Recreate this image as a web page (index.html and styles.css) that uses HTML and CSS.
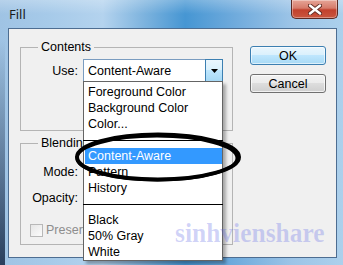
FILE: index.html
```html
<!DOCTYPE html>
<html>
<head>
<meta charset="utf-8">
<link rel="stylesheet" href="styles.css">
</head>
<body>
<div class="window">
  <div class="titlebar">
    <span class="title">Fill</span>
    <div class="close">
      <svg width="14" height="11" viewBox="0 0 14 11">
        <path d="M2 1.5 L12 9.5 M12 1.5 L2 9.5" stroke="#5e2a22" stroke-width="4.2" stroke-linecap="round"/>
        <path d="M2 1.5 L12 9.5 M12 1.5 L2 9.5" stroke="#ffffff" stroke-width="2.4" stroke-linecap="round"/>
      </svg>
    </div>
  </div>
  <div class="client">
    <div class="left">
      <div class="group contents">
        <span class="legend">Contents</span>
        <div class="row use">
          <span class="lbl">Use:</span>
          <div class="combo">
            <span class="combo-value">Content-Aware</span>
            <span class="combo-btn">
              <svg width="7" height="4" viewBox="0 0 7 4"><path d="M0 0 H7 L3.5 4 Z" fill="#000"/></svg>
            </span>
            <ul class="droplist">
              <li>Foreground Color</li>
              <li>Background Color</li>
              <li>Color...</li>
              <li class="sep"></li>
              <li class="sel">Content-Aware</li>
              <li>Pattern</li>
              <li>History</li>
              <li class="sep"></li>
              <li>Black</li>
              <li>50% Gray</li>
              <li>White</li>
            </ul>
          </div>
        </div>
      </div>
      <div class="group blending">
        <span class="legend">Blending</span>
        <div class="row mode"><span class="lbl">Mode:</span></div>
        <div class="row opacity"><span class="lbl">Opacity:</span></div>
        <div class="check-row">
          <span class="checkbox"></span>
          <span class="dim">Preserve Transparency</span>
        </div>
      </div>
    </div>
    <div class="buttons">
      <button class="btn default">OK</button>
      <button class="btn">Cancel</button>
    </div>
  </div>
  <div class="watermark">sinhvienshare</div>
  <svg class="ellipse" width="343" height="265" viewBox="0 0 343 265">
    <ellipse cx="158" cy="157" rx="81" ry="22.5" fill="none" stroke="#000" stroke-width="4"/>
    <ellipse cx="157" cy="158" rx="80" ry="22" fill="none" stroke="#000" stroke-width="3"/>
  </svg>
</div>
</body>
</html>
```

FILE: styles.css
```css
* { box-sizing: border-box; }

body {
  margin: 0;
  font-family: "Liberation Sans", Arial, sans-serif;
  font-size: 12.5px;
  color: #000;
}

.window {
  position: relative;
  width: 343px;
  height: 265px;
  overflow: hidden;
  background:
    linear-gradient(to bottom, rgba(20, 45, 80, 0) 15%, rgba(20, 40, 70, 0.85) 100%) 0 0 / 5px 100% no-repeat,
    linear-gradient(to bottom, rgba(255, 255, 255, 0.25) 0, rgba(255, 255, 255, 0) 14px),
    linear-gradient(to right, #9fc3e4 0%, #a6cae9 14%, #b4d3ee 30%, #7db3de 42%, #4696d3 54%, #6eaadc 68%, #9cc4e7 85%, #acd0ec 100%);
}

.titlebar {
  height: 28px;
  display: flex;
  align-items: flex-start;
}

.title {
  font-family: "Noto Sans", "Liberation Sans", sans-serif;
  font-size: 13px;
  line-height: 28px;
  padding-left: 9px;
  color: #1b1b1b;
}

.close {
  margin-left: auto;
  margin-right: 5px;
  width: 47px;
  height: 19px;
  border: 1px solid #5b2a24;
  border-top: none;
  border-radius: 0 0 5px 5px;
  background: linear-gradient(#e6a597 0%, #d67b6b 45%, #c2412d 55%, #c9563f 100%);
  box-shadow: inset 0 0 0 1px rgba(255, 255, 255, 0.35);
  display: flex;
  align-items: center;
  justify-content: center;
}

.client {
  margin: 0 6px 0 8px;
  height: 230px;
  border: 1px solid #4d6d91;
  background: #f0f0f0;
  display: flex;
}

.left {
  margin-left: 11px;
  width: 213px;
}

.group {
  border: 1px solid #b4b4b4;
}

.contents {
  margin-top: 18px;
  height: 84px;
}

.blending {
  margin-top: 12px;
  height: 102px;
}

.legend {
  display: block;
  width: max-content;
  margin: -9px 0 0 17px;
  padding: 0 3px;
  line-height: 16px;
  background: #f0f0f0;
}

.row {
  display: flex;
  align-items: center;
  height: 20px;
}

.use {
  height: 23px;
  margin-top: 4px;
}

.mode { margin-top: 11px; }
.opacity { margin-top: 6px; }

.lbl {
  width: 57px;
  text-align: right;
  margin-right: 5px;
}

.combo {
  position: relative;
  width: 140px;
  height: 23px;
  border: 1px solid #7a9cc0;
  background: #fff;
  display: flex;
  align-items: center;
}

.combo-value {
  flex: 1;
  padding-left: 4px;
}

.combo-btn {
  width: 18px;
  border: 1px solid #3c7fb1;
  margin: -1px -1px -1px 0;
  height: 23px;
  background: linear-gradient(#eaf6fd 0%, #d9f0fc 50%, #bee6fd 50%, #a7d9f5 100%);
  display: flex;
  align-items: center;
  justify-content: center;
}

.droplist {
  position: absolute;
  left: -1px;
  top: 100%;
  width: 140px;
  margin: 0;
  padding: 2px 0 0;
  list-style: none;
  border: 1px solid #646464;
  background: #fff;
  box-shadow: 3px 3px 3px rgba(0, 0, 0, 0.3);
  z-index: 5;
}

.droplist li {
  line-height: 16px;
  height: 16px;
  padding-left: 3px;
  margin-left: 1px;
  white-space: nowrap;
}

.droplist li.sel {
  background: #3399ff;
  color: #fff;
}

.droplist li.sep {
  margin-left: -1px;
  width: calc(100% + 2px);
  padding: 0;
  background: linear-gradient(transparent 8px, #000 8px, #000 9px, transparent 9px);
}

.check-row {
  display: flex;
  align-items: center;
  height: 16px;
  margin-top: 14px;
  padding-left: 9px;
  white-space: nowrap;
}

.checkbox {
  width: 13px;
  height: 13px;
  border: 1px solid #b8b8b8;
  background: linear-gradient(135deg, #e6e6e6, #fbfbfb);
  margin-right: 3px;
  flex: none;
}

.dim { color: #8d8d8d; }

.buttons {
  margin-left: 17px;
  padding-top: 17px;
  display: flex;
  flex-direction: column;
  gap: 9px;
}

.btn {
  width: 76px;
  height: 19px;
  padding: 0;
  font: inherit;
  color: #000;
  border: 1px solid #707070;
  border-radius: 3px;
  background: linear-gradient(#f2f2f2 0%, #ebebeb 50%, #dddddd 50%, #cfcfcf 100%);
  box-shadow: inset 0 0 0 1px rgba(255, 255, 255, 0.7);
}

.btn.default {
  border-color: #3c7fb1;
  background: linear-gradient(#eaf6fd 0%, #d9f0fc 50%, #bee6fd 50%, #a7d9f5 100%);
  box-shadow: inset 0 0 0 1px rgba(255, 255, 255, 0.6);
}

.watermark {
  position: absolute;
  left: 175px;
  top: 219px;
  font-family: "Liberation Serif", serif;
  font-weight: bold;
  font-size: 28px;
  line-height: 28px;
  color: rgba(90, 100, 230, 0.28);
  transform: scaleX(0.91);
  transform-origin: 0 0;
  z-index: 8;
  pointer-events: none;
}

.ellipse {
  position: absolute;
  left: 0;
  top: 0;
  z-index: 10;
  pointer-events: none;
}
```
